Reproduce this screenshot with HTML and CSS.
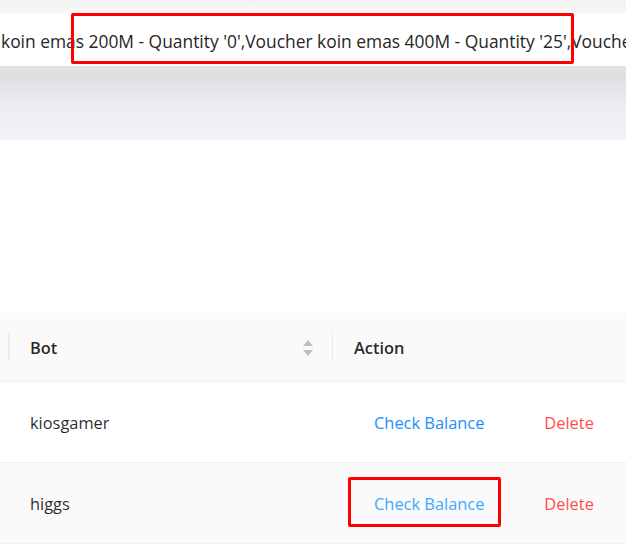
FILE: index.html
```html
<!DOCTYPE html>
<html>
<head>
<meta charset="utf-8">
<link rel="stylesheet" href="styles.css">
</head>
<body>
<div class="page">
  <div class="top-strip"></div>
  <div class="notice">
    <span class="notice-text">koin emas 200M - Quantity '0',Voucher koin emas 400M - Quantity '25',Voucher koin emas 1B - Quantity '3'</span>
    <div class="mark mark-notice"></div>
  </div>
  <div class="gray-band"></div>
  <div class="spacer"></div>
  <div class="table">
    <div class="row head">
      <div class="cell c-prev"></div>
      <div class="cell c-bot">
        <span>Bot</span>
        <span class="sorter">
          <svg width="10" height="18" viewBox="0 0 10 18"><path d="M5 1 L10 7 L0 7 Z" fill="#bfbfbf"/><path d="M0 11 L10 11 L5 17 Z" fill="#bfbfbf"/></svg>
        </span>
      </div>
      <div class="cell c-action">Action</div>
    </div>
    <div class="row">
      <div class="cell c-prev"></div>
      <div class="cell c-bot">kiosgamer</div>
      <div class="cell c-action">
        <a class="link">Check Balance</a>
        <a class="danger">Delete</a>
      </div>
    </div>
    <div class="row hover">
      <div class="cell c-prev"></div>
      <div class="cell c-bot">higgs</div>
      <div class="cell c-action">
        <a class="link light">Check Balance</a>
        <a class="danger">Delete</a>
      </div>
      <span class="mark mark-btn"></span>
    </div>
  </div>
</div>
</body>
</html>
```
FILE: styles.css
```css
html, body {
  margin: 0;
  padding: 0;
  background: #fff;
}
.page {
  width: 626px;
  height: 544px;
  overflow: hidden;
  font-family: "Open Sans", "Noto Sans", sans-serif;
  color: rgba(0,0,0,0.85);
}
.top-strip {
  height: 13px;
  background: linear-gradient(#f3f3f3, #f8f8f8);
}
.notice {
  position: relative;
  height: 53px;
  background: #fff;
  display: flex;
  align-items: center;
  white-space: nowrap;
}
.notice-text {
  font-size: 17.4px;
  color: #262626;
  padding-left: 1px;
  padding-top: 2px;
}
.gray-band {
  height: 74px;
  background: linear-gradient(#e2e2e3 0px, #e2e2e3 6px, #dcdde0 7px, #eceef1 40px, #f0f2f5 74px);
}
.spacer {
  height: 173px;
}
.table {
  position: relative;
}
.row {
  display: flex;
  height: 80px;
  border-bottom: 1px solid #f0f0f0;
  align-items: center;
  font-size: 16.4px;
  position: relative;
}
.row.head {
  height: 68px;
  background: #fafafa;
  font-weight: 600;
  color: rgba(0,0,0,0.85);
}
.row.hover {
  background: #fafafa;
}
.cell {
  height: 100%;
  display: flex;
  align-items: center;
  box-sizing: border-box;
  padding-top: 1px;
}
.c-prev {
  width: 9px;
}
.c-bot {
  width: 324px;
  padding-left: 21px;
  padding-right: 20px;
  justify-content: space-between;
  position: relative;
}
.c-action {
  flex: 1;
  padding-left: 21px;
  position: relative;
}
.head .c-bot::before,
.head .c-action::before {
  content: "";
  position: absolute;
  left: -1px;
  top: 20px;
  height: 28px;
  width: 1px;
  background: #ececec;
}
.head .c-bot::before {
  width: 2px;
}
.sorter {
  display: flex;
}
.row:not(.head) .c-action {
  padding-left: 41px;
}
.link {
  color: #1890ff;
}
.link.light {
  color: #40a9ff;
}
.danger {
  color: #ff4d4f;
  margin-left: 60px;
}
.mark {
  position: absolute;
  border: 3px solid #ff0000;
  border-radius: 2px;
  box-sizing: border-box;
}
.mark-notice {
  left: 71px;
  top: 0;
  width: 503px;
  height: 51px;
}
.mark-btn {
  left: 348px;
  top: 14px;
  width: 153px;
  height: 50px;
}
```
